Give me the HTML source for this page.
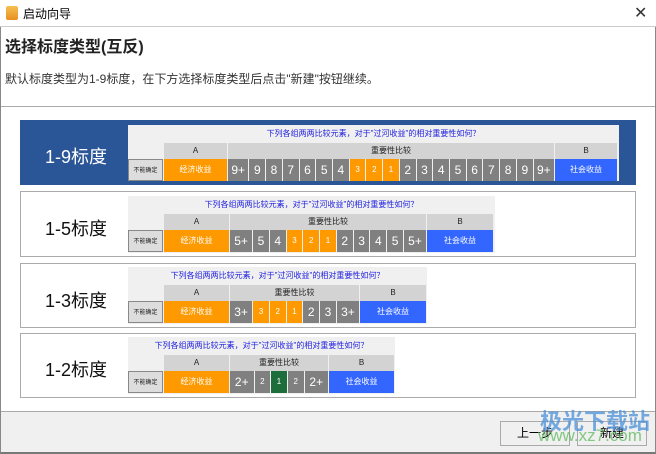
<!DOCTYPE html>
<html><head><meta charset="utf-8"><style>
*{margin:0;padding:0;box-sizing:border-box}
body{width:656px;height:454px;position:relative;background:#fff;font-family:"Liberation Sans","Noto Sans CJK SC",sans-serif;overflow:hidden}
.win{position:absolute;left:0;top:0;width:656px;height:454px;border:1px solid #888;border-bottom:2px solid #777}
.tb{position:absolute;left:0;top:0;width:656px;height:27px;border-bottom:1px solid #ccc;background:#fff}
.tb .ic{position:absolute;left:6px;top:6px;width:12px;height:14px;background:linear-gradient(#f5c050,#e89020);border-radius:2px}
.tb .t{position:absolute;left:23px;top:5px;font-size:12px;color:#000}
.tb .x{position:absolute;left:634px;top:3px;font-size:16px;color:#333;font-weight:100;font-family:"DejaVu Sans",sans-serif}
.h1{position:absolute;left:5px;top:33px;font-size:16px;font-weight:bold;color:#222}
.desc{position:absolute;left:5px;top:70px;font-size:12px;color:#333}
.sep{position:absolute;left:1px;top:106px;width:654px;border-top:1px solid #aaa}
.card{position:absolute;left:20px;width:616px;border:1px solid #aaa;background:#fff}
.card.sel{background:#2a5597;border-color:#2a5597}
.lab{position:absolute;left:2px;width:106px;text-align:center;font-size:18px;color:#111}
.sel .lab{color:#fff}
.img{position:absolute;left:107px;background:#f0f0f0;font-size:8px}
.ti{height:18px;text-align:center;color:#2020e0;font-size:8px;line-height:18px}
.row{display:flex;height:16px}
.row div{background:#d3d3d3;margin-left:1px;text-align:center;line-height:16px;color:#222}
.row2{display:flex;height:22px}
.row2 div{margin-left:1px;text-align:center;line-height:22px;color:#fff}
.bn{background:#ddd!important;color:#222!important;border:1px solid #888;font-size:6px;margin-left:0!important}
.o{background:#ff9900}.g{background:#808080;font-size:12px}.b{background:#3366ff}.gr{background:#1e6e3c}
.g.s{font-size:8px}
.foot{position:absolute;left:1px;top:411px;width:654px;height:41px;background:#f0f0f0;border-top:1px solid #aaa}
.btn{position:absolute;top:9px;height:25px;border:1px solid #aaa;background:#f0f0f0;font-size:12px;text-align:center;line-height:23px}
.wm{position:absolute;left:540px;top:404px;font-size:22px;font-weight:bold;color:#4a90d9;opacity:.75}
.wm2{position:absolute;left:538px;top:426px;font-size:17px;color:#5cb85c;opacity:.75}
</style></head><body>
<div class="win"></div>
<div class="tb"><div class="ic"></div><div class="t">启动向导</div><div class="x">✕</div></div>
<div class="h1">选择标度类型(互反)</div>
<div class="desc">默认标度类型为1-9标度，在下方选择标度类型后点击"新建"按钮继续。</div>
<div class="sep"></div>

<div class="card sel" style="top:120px;height:65px">
<div class="lab" style="top:22px">1-9标度</div>
<div class="img" style="top:4px;width:491px;height:56px">
<div class="ti">下列各组两两比较元素，对于"过河收益"的相对重要性如何？</div>
<div class="row"><div style="width:35px;background:#f0f0f0;margin-left:0"></div><div style="width:63px">A</div><div style="width:326px">重要性比较</div><div style="width:62px">B</div></div>
<div class="row2"><div class="bn" style="width:35px">不能确定</div><div class="o" style="width:63px">经济收益</div>
<div style="display:flex;width:327px;margin-left:0">
<div class="g" style="flex:1.3">9+</div><div class="g" style="flex:1">9</div><div class="g" style="flex:1">8</div><div class="g" style="flex:1">7</div><div class="g" style="flex:1">6</div><div class="g" style="flex:1">5</div><div class="g" style="flex:1">4</div><div class="o s" style="flex:1">3</div><div class="o" style="flex:1">2</div><div class="o" style="flex:1">1</div><div class="g" style="flex:1">2</div><div class="g" style="flex:1">3</div><div class="g" style="flex:1">4</div><div class="g" style="flex:1">5</div><div class="g" style="flex:1">6</div><div class="g" style="flex:1">7</div><div class="g" style="flex:1">8</div><div class="g" style="flex:1">9</div><div class="g" style="flex:1.3">9+</div></div>
<div class="b" style="width:62px">社会收益</div></div>
</div></div>

<div class="card" style="top:191px;height:66px">
<div class="lab" style="top:23px">1-5标度</div>
<div class="img" style="top:4px;width:367px;height:57px">
<div class="ti">下列各组两两比较元素，对于"过河收益"的相对重要性如何？</div>
<div class="row"><div style="width:35px;background:#f0f0f0;margin-left:0"></div><div style="width:65px">A</div><div style="width:196px">重要性比较</div><div style="width:66px">B</div></div>
<div class="row2"><div class="bn" style="width:35px">不能确定</div><div class="o" style="width:65px">经济收益</div>
<div style="display:flex;width:197px;margin-left:0">
<div class="g" style="flex:1.4">5+</div><div class="g" style="flex:1">5</div><div class="g" style="flex:1">4</div><div class="o" style="flex:1">3</div><div class="o" style="flex:1">2</div><div class="o" style="flex:1">1</div><div class="g" style="flex:1">2</div><div class="g" style="flex:1">3</div><div class="g" style="flex:1">4</div><div class="g" style="flex:1">5</div><div class="g" style="flex:1.4">5+</div></div>
<div class="b" style="width:66px">社会收益</div></div>
</div></div>

<div class="card" style="top:263px;height:65px">
<div class="lab" style="top:23px">1-3标度</div>
<div class="img" style="top:3px;width:299px;height:57px">
<div class="ti">下列各组两两比较元素，对于"过河收益"的相对重要性如何？</div>
<div class="row"><div style="width:35px;background:#f0f0f0;margin-left:0"></div><div style="width:65px">A</div><div style="width:129px">重要性比较</div><div style="width:66px">B</div></div>
<div class="row2"><div class="bn" style="width:35px">不能确定</div><div class="o" style="width:65px">经济收益</div>
<div style="display:flex;width:130px;margin-left:0">
<div class="g" style="flex:1.4">3+</div><div class="o" style="flex:1">3</div><div class="o" style="flex:1">2</div><div class="o" style="flex:1">1</div><div class="g" style="flex:1">2</div><div class="g" style="flex:1">3</div><div class="g" style="flex:1.4">3+</div></div>
<div class="b" style="width:66px">社会收益</div></div>
</div></div>

<div class="card" style="top:333px;height:65px">
<div class="lab" style="top:22px">1-2标度</div>
<div class="img" style="top:3px;width:267px;height:57px">
<div class="ti">下列各组两两比较元素，对于"过河收益"的相对重要性如何？</div>
<div class="row"><div style="width:35px;background:#f0f0f0;margin-left:0"></div><div style="width:65px">A</div><div style="width:98px">重要性比较</div><div style="width:65px">B</div></div>
<div class="row2"><div class="bn" style="width:35px">不能确定</div><div class="o" style="width:65px">经济收益</div>
<div style="display:flex;width:99px;margin-left:0">
<div class="g" style="flex:1.5">2+</div><div class="g s" style="flex:1">2</div><div class="gr" style="flex:1;font-size:8px">1</div><div class="g s" style="flex:1">2</div><div class="g" style="flex:1.5">2+</div></div>
<div class="b" style="width:65px">社会收益</div></div>
</div></div>

<div class="foot">
<div class="btn" style="left:499px;width:70px">上一步</div>
<div class="btn" style="left:576px;width:70px">新建</div>
</div>
<div class="wm">极光下载站</div>
<div class="wm2">www.xz7.com</div>
</body></html>
